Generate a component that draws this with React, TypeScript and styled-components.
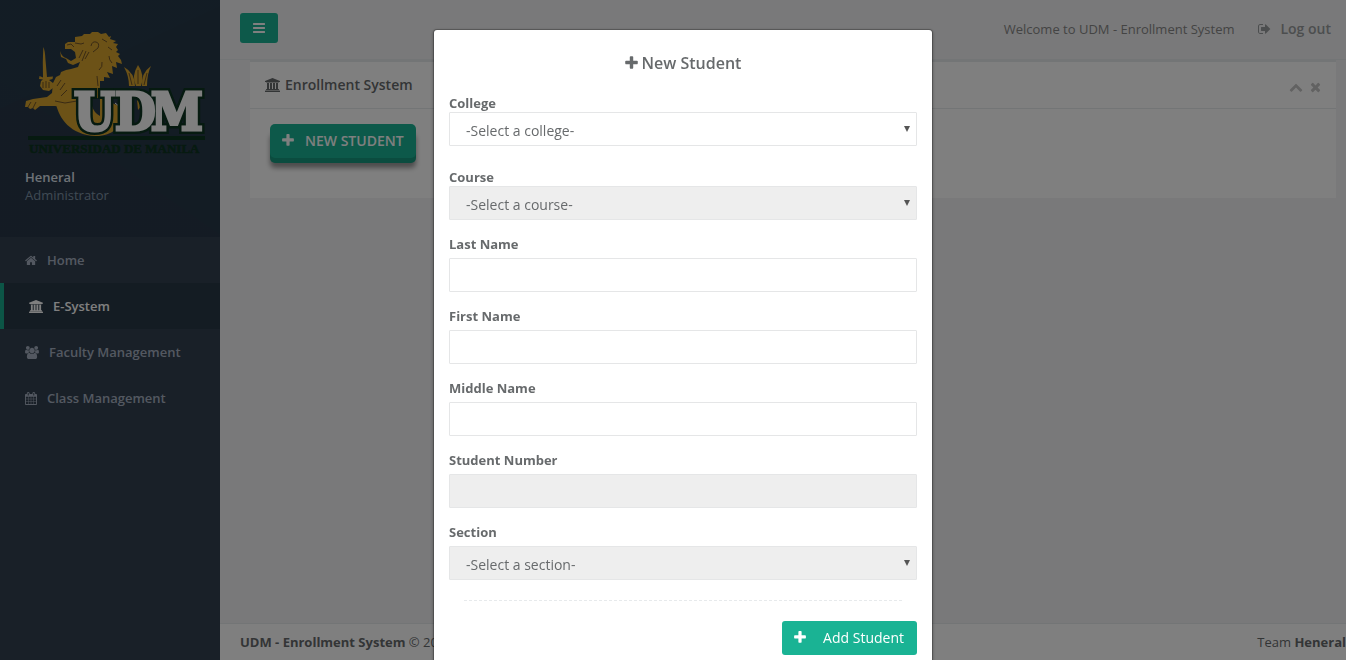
import React from "react";
import styled, { createGlobalStyle } from "styled-components";

const GlobalStyle = createGlobalStyle`
  * { box-sizing: border-box; }
  body {
    margin: 0;
    background: #f3f3f4;
    color: #676a6c;
    font-family: "Open Sans", "Liberation Sans", sans-serif;
    font-size: 13px;
    line-height: 18px;
    overflow: hidden;
  }
  button, input, select { font-family: inherit; color: inherit; }
`;

const icons = {
  home: { box: "64 0 1664 1792", w: 1664, d: "M1472 992v480q0 26-19 45t-45 19h-384v-384h-256v384h-384q-26 0-45-19t-19-45v-480q0-1 .5-3t.5-3l575-474 575 474q1 2 1 6zm223-69l-62 74q-8 9-21 11h-3q-13 0-21-7l-692-577-692 577q-12 8-24 7-13-2-21-11l-62-74q-8-10-7-23.5t11-21.5l719-599q32-26 76-26t76 26l244 204v-195q0-14 9-23t23-9h192q14 0 23 9t9 23v408l219 182q10 8 11 21.5t-7 23.5z" },
  bars: { box: "128 0 1536 1792", w: 1536, d: "M1664 1344v128q0 26-19 45t-45 19h-1408q-26 0-45-19t-19-45v-128q0-26 19-45t45-19h1408q26 0 45 19t19 45zm0-512v128q0 26-19 45t-45 19h-1408q-26 0-45-19t-19-45v-128q0-26 19-45t45-19h1408q26 0 45 19t19 45zm0-512v128q0 26-19 45t-45 19h-1408q-26 0-45-19t-19-45v-128q0-26 19-45t45-19h1408q26 0 45 19t19 45z" },
  plus: { box: "192 0 1408 1792", w: 1408, d: "M1600 736v192q0 40-28 68t-68 28h-416v416q0 40-28 68t-68 28h-192q-40 0-68-28t-28-68v-416h-416q-40 0-68-28t-28-68v-192q0-40 28-68t68-28h416v-416q0-40 28-68t68-28h192q40 0 68 28t28 68v416h416q40 0 68 28t28 68z" },
  signOut: { box: "64 0 1664 1792", w: 1664, d: "M704 1440q0 4 1 20t.5 26.5-3 23.5-10 19.5-20.5 6.5h-320q-119 0-203.5-84.5t-84.5-203.5v-704q0-119 84.5-203.5t203.5-84.5h320q13 0 22.5 9.5t9.5 22.5q0 4 1 20t.5 26.5-3 23.5-10 19.5-20.5 6.5h-320q-66 0-113 47t-47 113v704q0 66 47 113t113 47h312l11.5 1 11.5 3 8 5.5 7 9 2 13.5zm928-544q0 26-19 45l-544 544q-19 19-45 19t-45-19-19-45v-288h-448q-26 0-45-19t-19-45v-384q0-26 19-45t45-19h448v-288q0-26 19-45t45-19 45 19l544 544q19 19 19 45z" },
  times: { box: "192 0 1408 1792", w: 1408, d: "M1490 1322q0 40-28 68l-136 136q-28 28-68 28t-68-28l-294-294-294 294q-28 28-68 28t-68-28l-136-136q-28-28-28-68t28-68l294-294-294-294q-28-28-28-68t28-68l136-136q28-28 68-28t68 28l294 294 294-294q28-28 68-28t68 28l136 136q28 28 28 68t-28 68l-294 294 294 294q28 28 28 68z" },
  chevronUp: { box: "0 0 1792 1792", w: 1792, d: "M1683 1331l-166 165q-19 19-45 19t-45-19l-531-531-531 531q-19 19-45 19t-45-19l-166-165q-19-19-19-45.5t19-45.5l742-741q19-19 45-19t45 19l742 741q19 19 19 45.5t-19 45.5z" },
  calendar: { box: "64 0 1664 1792", w: 1664, d: "M192 1664h288v-288h-288v288zm352 0h320v-288h-320v288zm-352-352h288v-320h-288v320zm352 0h320v-320h-320v320zm-352-384h288v-288h-288v288zm736 736h320v-288h-320v288zm-384-736h320v-288h-320v288zm768 736h288v-288h-288v288zm-384-352h320v-320h-320v320zm-352-864v-288q0-13-9.5-22.5t-22.5-9.5h-64q-13 0-22.5 9.5t-9.5 22.5v288q0 13 9.5 22.5t22.5 9.5h64q13 0 22.5-9.5t9.5-22.5zm736 864h288v-320h-288v320zm-384-384h320v-288h-320v288zm384 0h288v-288h-288v288zm32-480v-288q0-13-9.5-22.5t-22.5-9.5h-64q-13 0-22.5 9.5t-9.5 22.5v288q0 13 9.5 22.5t22.5 9.5h64q13 0 22.5-9.5t9.5-22.5zm384-64v1280q0 52-38 90t-90 38h-1408q-52 0-90-38t-38-90v-1280q0-52 38-90t90-38h128v-96q0-66 47-113t113-47h64q66 0 113 47t47 113v96h384v-96q0-66 47-113t113-47h64q66 0 113 47t47 113v96h128q52 0 90 38t38 90z" },
  users: { box: "0 0 1920 1792", w: 1920, d: "M593 896q-162 5-265 128h-134q-82 0-138-40.5t-56-118.5q0-353 124-353 6 0 43.5 21t97.5 42.5 119 21.5q67 0 133-23-5 37-5 66 0 139 81 256zm1071 637q0 120-73 189.5t-194 69.5h-874q-121 0-194-69.5t-73-189.5q0-53 3.5-103.5t14-109 26.5-108.5 43-97.5 62-81 85.5-53.5 111.5-20q10 0 43 21.5t73 48 107 48 135 21.5 135-21.5 107-48 73-48 43-21.5q61 0 111.5 20t85.5 53.5 62 81 43 97.5 26.5 108.5 14 109 3.5 103.5zm-1024-1277q0 106-75 181t-181 75-181-75-75-181 75-181 181-75 181 75 75 181zm704 384q0 159-112.5 271.5t-271.5 112.5-271.5-112.5-112.5-271.5 112.5-271.5 271.5-112.5 271.5 112.5 112.5 271.5zm576 225q0 78-56 118.5t-138 40.5h-134q-103-123-265-128 81-117 81-256 0-29-5-66 66 23 133 23 59 0 119-21.5t97.5-42.5 43.5-21q124 0 124 353zm-128-609q0 106-75 181t-181 75-181-75-75-181 75-181 181-75 181 75 75 181z" },
  university: { box: "0 0 1920 1792", w: 1920, d: "M960 0l960 384v128h-128q0 26-20.5 45t-48.5 19h-1526q-28 0-48.5-19t-20.5-45h-128v-128zm-704 640h256v768h128v-768h256v768h128v-768h256v768h128v-768h256v768h59q28 0 48.5 19t20.5 45v64h-1664v-64q0-26 20.5-45t48.5-19h59v-768zm1595 960q28 0 48.5 19t20.5 45v128h-1920v-128q0-26 20.5-45t48.5-19h1782z" },
};

type IconName = keyof typeof icons;

const IconSvg = styled.svg`
  display: block;
  flex: none;
  fill: currentColor;
`;

function Icon({ name, size = 13 }: { name: IconName; size?: number }) {
  const icon = icons[name];
  return (
    <IconSvg viewBox={icon.box} width={Math.round((icon.w * size) / 1792)} height={size} aria-hidden="true">
      <path d={icon.d} />
    </IconSvg>
  );
}

const Page = styled.div`
  display: flex;
  height: 100vh;
`;

const Sidebar = styled.nav`
  flex: none;
  width: 220px;
  background: #334150;
`;

const Profile = styled.div`
  height: 237px;
  padding: 28px 0 0 25px;
  background:
    linear-gradient(155deg, rgba(38, 60, 78, 0.4) 0 32%, transparent 32%),
    linear-gradient(35deg, rgba(42, 54, 72, 0.4) 0 40%, transparent 40%),
    #273849;
`;

const LogoSvg = styled.svg`
  display: block;
  width: 182px;
  height: 128px;
`;

const UserName = styled.strong`
  display: block;
  margin-top: 12px;
  color: #dfe4ed;
  font-weight: 600;
`;

const UserRole = styled.span`
  color: #8095a8;
`;

const Menu = styled.ul`
  margin: 0;
  padding: 0;
  list-style: none;
`;

const MenuLink = styled.a<{ $active?: boolean }>`
  display: flex;
  align-items: center;
  gap: 10px;
  height: 46px;
  padding-left: 25px;
  border-left: ${(p) => (p.$active ? "4px solid #19aa8d" : "0")};
  background: ${(p) => (p.$active ? "#293846" : "transparent")};
  color: ${(p) => (p.$active ? "#ffffff" : "#a7b1c2")};
  font-weight: 600;
  text-decoration: none;
`;

const Main = styled.main`
  flex: 1;
  min-width: 0;
  display: flex;
  flex-direction: column;
`;

const TopBar = styled.header`
  display: flex;
  align-items: center;
  height: 60px;
  padding: 0 15px 4px 20px;
  border-bottom: 1px solid #e7eaec;
`;

const MenuButton = styled.button`
  display: flex;
  align-items: center;
  justify-content: center;
  width: 38px;
  height: 30px;
  padding: 0;
  border: 0;
  border-radius: 3px;
  background: #1ab394;
  color: #fff;
`;

const Welcome = styled.span`
  margin: 3px 24px 0 auto;
  color: #888888;
`;

const LogOut = styled.a`
  display: flex;
  align-items: center;
  gap: 9px;
  padding-top: 3px;
  color: #999c9e;
  font-size: 14px;
  font-weight: 600;
  text-decoration: none;
`;

const Card = styled.section`
  margin: 0 10px 0 30px;
  border-top: 2px solid #e7eaec;
  background: #fff;
`;

const CardHead = styled.div`
  display: flex;
  align-items: center;
  height: 47px;
  padding: 0 15px;
  border-bottom: 1px solid #e7eaec;
`;

const CardTitle = styled.h5`
  display: flex;
  align-items: center;
  gap: 5px;
  margin: 0;
  font-size: 14px;
  font-weight: 600;
`;

const CardTools = styled.div`
  display: flex;
  gap: 7px;
  margin-left: auto;
  padding-top: 3px;
`;

const ToolButton = styled.button`
  padding: 0;
  border: 0;
  background: none;
  color: #c4c4c4;
`;

const CardBody = styled.div`
  height: 89px;
  padding: 15px 20px;
`;

const NewButton = styled.button`
  display: flex;
  align-items: center;
  gap: 11px;
  height: 34px;
  padding: 0 12px 2px;
  border: 0;
  border-radius: 5px;
  background: #1ab394;
  box-shadow: 0 5px 0 0 #16987e, 0 10px 5px #999;
  color: #fff;
  font-size: 14px;
  font-weight: 600;
`;

const Footer = styled.footer`
  display: flex;
  justify-content: space-between;
  height: 37px;
  margin-top: auto;
  padding: 9px 0 0 20px;
  border-top: 1px solid #e7eaec;
  background: #fff;
`;

const Backdrop = styled.div`
  position: fixed;
  inset: 0;
  display: flex;
  align-items: flex-start;
  justify-content: center;
  padding: 29px 0 0 20px;
  background: rgba(0, 0, 0, 0.5);
  overflow: hidden;
`;

const Dialog = styled.div`
  width: 500px;
  padding: 22px 15px 30px;
  border: 1px solid rgba(0, 0, 0, 0.2);
  border-radius: 4px;
  background: #fff;
  background-clip: padding-box;
  box-shadow: 0 1px 3px rgba(0, 0, 0, 0.3);
`;

const DialogTitle = styled.h3`
  display: flex;
  align-items: center;
  justify-content: center;
  gap: 4px;
  margin: 0 0 20px;
  font-size: 16px;
  font-weight: 600;
  line-height: 22px;
`;

const Field = styled.div<{ $tight?: boolean }>`
  display: flex;
  flex-direction: column;
  gap: ${(p) => (p.$tight ? "0" : "5px")};
  margin-bottom: 15px;
`;

const CollegeField = styled(Field)`
  margin-bottom: 22px;
`;

const Label = styled.label`
  font-weight: 700;
`;

const Input = styled.input`
  width: 100%;
  height: 34px;
  padding: 6px 12px;
  border: 1px solid #e5e6e7;
  border-radius: 1px;
  background: #fff;
  font-size: 14px;
  &:disabled { background: #eee; }
`;

const SelectWrap = styled.div`
  position: relative;
`;

const Select = styled.select`
  display: block;
  width: 100%;
  height: 34px;
  padding: 6px 16px 4px;
  border: 1px solid #e5e6e7;
  border-radius: 1px;
  background: #fff;
  font-size: 14px;
  appearance: none;
  &:disabled { background: #eee; color: inherit; opacity: 1; }
`;

const Arrow = styled.svg`
  position: absolute;
  top: 14px;
  right: 7px;
  width: 6px;
  height: 6px;
  fill: #555;
  pointer-events: none;
`;

const Divider = styled.hr`
  margin: 20px 15px;
  border: 0;
  border-top: 1px dashed #e7eaec;
`;

const Actions = styled.div`
  display: flex;
  justify-content: flex-end;
`;

const AddButton = styled.button`
  display: flex;
  align-items: center;
  gap: 17px;
  height: 34px;
  padding: 0 13px 2px 12px;
  border: 0;
  border-radius: 3px;
  background: #1ab394;
  color: #fff;
  font-size: 14px;
`;

function Logo() {
  const letters = (
    <>
      <text x="74" y="130">U</text>
      <text x="115" y="130">D</text>
      <text x="151" y="130">M</text>
    </>
  );
  return (
    <LogoSvg viewBox="25 28 182 128" role="img" aria-label="Universidad de Manila">
      <g fill="#d8a42e">
        <path d="M43.300 47Q45 50 45.500 60L47 77L53 76.500L52.500 79L49 80L53 83L53 88L49 91L43 90L40 86L41 81L43 79.500L39 79L39.500 76L43 77.500L42.800 62Z" />
        <path d="M60 51Q62 57 66 58L71 61L76 58L75 52L71 49L65 49L65 44L68 42L75 42L75 37L82 36L84 34L90 34L92 32L98 32L101 34L106 33L109 37L111 36L110 39L116 41L113 43L118 44L116 47L118 50L116 52L120 54L118 56L121 60L122 64L116 62L117 68L112 66L113 74L107 72L110 78L104 77L104 81L100 81L100 86L98 110L77 110L71 108L55 106L40 106L35 110L33 108L30 109L28 107L25 107L26 101L33 99L47 97L52 93L53 83L56 77L60 75L61 72L66 70L71 69L78 67L80 62L73 65L68 63L66 59L61 57Z" />
        <path d="M56 104C59 118 70 135 96 136C113 136 122 127 124 108L100 98L84 94L76 98Z" />
        <path d="M124 67Q135 73 135 86H129Q129 76 124 67Z" />
        <path d="M138 65Q145 75 141 86H136Q131 76 138 65Z" />
        <path d="M151 66Q141 73 142 86H147Q147 74 151 66Z" />
        <path d="M137 99h5v6l-4 5z" />
      </g>
      <path d="M92 98h8v18q-6-3-8-10z" fill="#273849" />
      <g fill="none" stroke="#735528">
        <path d="M67 45l4-1 3 3M75 43l6 1 3-1M83 50l-4 8M86 51l-4 10M89 52l-4 7M91 46q1-5 5-4t2 6l-5 4M102 39l5 3M108 47l4 3M109 56q0 4 3 7M102 62q1 5-3 8M97 76l1 10M61 80l-4 6M65 83l-5 7M67 90l-6 6M55 101l10 2 12-2M31 102l-3 5M36 102l-3 6M43 82v6M46 81v7M49 82v6" />
        <path d="M138 70v14M129 73l3 12M147 73l-3 12" />
      </g>
      <path d="M115 103q3 4 8 3" fill="none" stroke="#fff" />
      <g fontFamily="DejaVu Serif" fontStretch="condensed" fontWeight="700" fontSize="52">
        <g fill="#0c3420" stroke="#0c3420" strokeWidth="8">{letters}</g>
        <g fill="#fff" stroke="#fff" strokeWidth="3">{letters}</g>
      </g>
      <path d="M28 136H205V140H28Z" fill="#0c3420" />
      <text x="29" y="153" fontFamily="Liberation Serif" fontWeight="700" fontSize="13" fill="#0c3420" stroke="#0c3420" strokeWidth="0.5">UNIVERSIDAD DE MANILA</text>
    </LogoSvg>
  );
}

function SelectField({ id, label, text, disabled, tight, as }: { id: string; label: string; text: string; disabled?: boolean; tight?: boolean; as?: typeof CollegeField }) {
  const Wrapper = as ?? Field;
  return (
    <Wrapper $tight={tight}>
      <Label htmlFor={id}>{label}</Label>
      <SelectWrap>
        <Select id={id} disabled={disabled}>
          <option>{text}</option>
        </Select>
        <Arrow viewBox="0 0 6 6" aria-hidden="true"><path d="M0 0h6L3 6z" /></Arrow>
      </SelectWrap>
    </Wrapper>
  );
}

function TextField({ id, label, disabled }: { id: string; label: string; disabled?: boolean }) {
  return (
    <Field>
      <Label htmlFor={id}>{label}</Label>
      <Input id={id} type="text" disabled={disabled} />
    </Field>
  );
}

const menuItems: { icon: IconName; label: string; active?: boolean }[] = [
  { icon: "home", label: "Home" },
  { icon: "university", label: "E-System", active: true },
  { icon: "users", label: "Faculty Management" },
  { icon: "calendar", label: "Class Management" },
];

export default function App() {
  return (
    <>
      <GlobalStyle />
      <Page>
        <Sidebar>
          <Profile>
            <Logo />
            <UserName>Heneral</UserName>
            <UserRole>Administrator</UserRole>
          </Profile>
          <Menu>
            {menuItems.map((item) => (
              <li key={item.label}>
                <MenuLink href="#" $active={item.active}>
                  <Icon name={item.icon} />
                  {item.label}
                </MenuLink>
              </li>
            ))}
          </Menu>
        </Sidebar>
        <Main>
          <TopBar>
            <MenuButton aria-label="Toggle menu"><Icon name="bars" size={14} /></MenuButton>
            <Welcome>Welcome to UDM - Enrollment System</Welcome>
            <LogOut href="#"><Icon name="signOut" size={14} />Log out</LogOut>
          </TopBar>
          <Card>
            <CardHead>
              <CardTitle><Icon name="university" size={14} />Enrollment System</CardTitle>
              <CardTools>
                <ToolButton aria-label="Collapse"><Icon name="chevronUp" size={14} /></ToolButton>
                <ToolButton aria-label="Close"><Icon name="times" size={14} /></ToolButton>
              </CardTools>
            </CardHead>
            <CardBody>
              <NewButton><Icon name="plus" size={15} />NEW STUDENT</NewButton>
            </CardBody>
          </Card>
          <Footer>
            <span><strong>UDM - Enrollment System</strong> © 2018</span>
            <span>Team <strong>Heneral</strong></span>
          </Footer>
        </Main>
      </Page>
      <Backdrop>
        <Dialog role="dialog" aria-modal="true" aria-labelledby="dialog-title">
          <DialogTitle id="dialog-title"><Icon name="plus" size={16} />New Student</DialogTitle>
          <SelectField id="college" label="College" text="-Select a college-" tight as={CollegeField} />
          <SelectField id="course" label="Course" text="-Select a course-" tight disabled />
          <TextField id="last-name" label="Last Name" />
          <TextField id="first-name" label="First Name" />
          <TextField id="middle-name" label="Middle Name" />
          <TextField id="student-number" label="Student Number" disabled />
          <SelectField id="section" label="Section" text="-Select a section-" disabled />
          <Divider />
          <Actions>
            <AddButton><Icon name="plus" size={15} />Add Student</AddButton>
          </Actions>
        </Dialog>
      </Backdrop>
    </>
  );
}
